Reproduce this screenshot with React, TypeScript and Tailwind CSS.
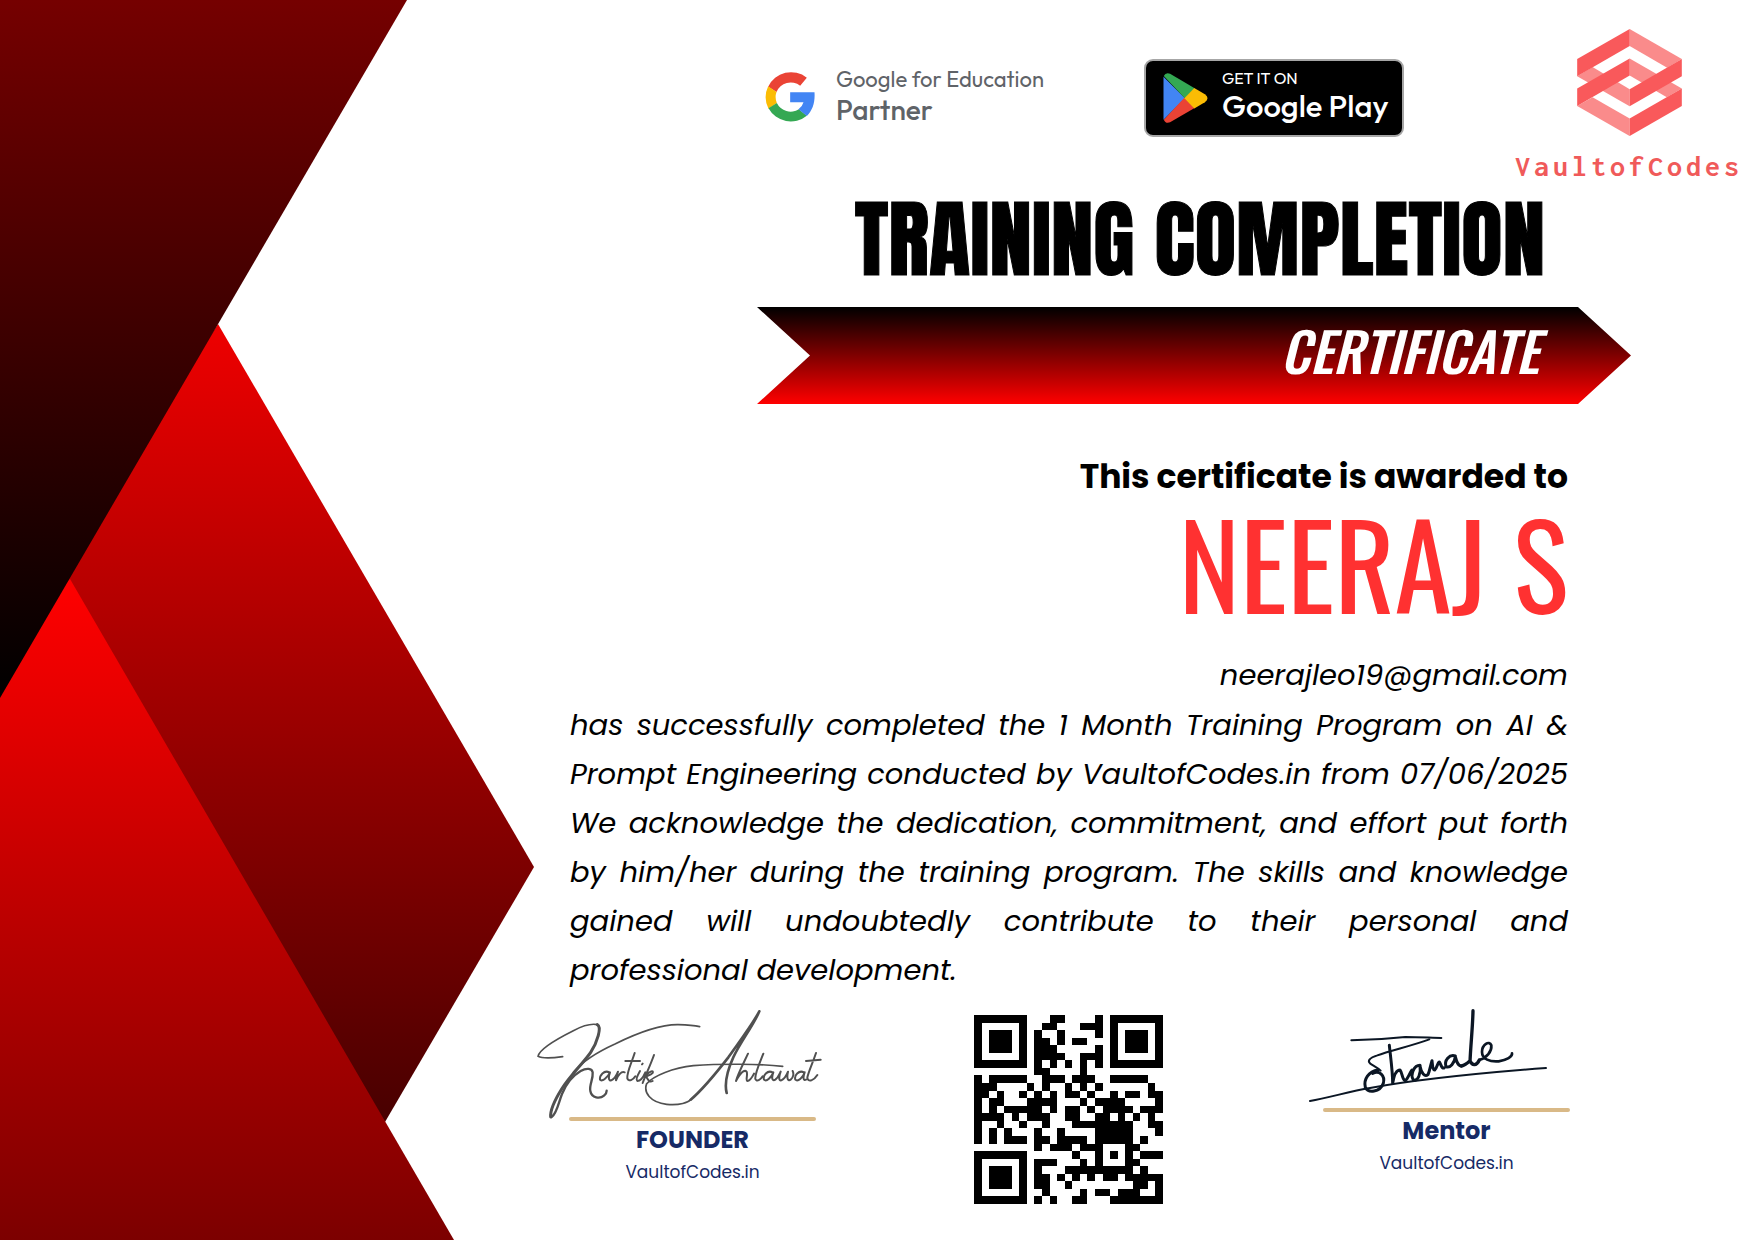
import type { ReactNode } from "react";

const QR_ROWS = [
  "1111111000110000101111111",
  "1000001001100011101000001",
  "1011101010010000101011101",
  "1011101011010110001011101",
  "1011101011100000101011101",
  "1000001011110011101000001",
  "1111111010101010101111111",
  "0000000011000010000000000",
  "1011111001110111001111100",
  "1110000101001010100000010",
  "1101001010101101001011011",
  "1011000111100010111100001",
  "1010111110101101011110111",
  "1111010111001100110101010",
  "1001001001000111111110011",
  "1010100010010000111110001",
  "1010111011011110111110100",
  "0000000010111011100011000",
  "1111111000000100101010111",
  "1000001011100010100011000",
  "1011101010001111111110100",
  "1011101011010101011011111",
  "1011101011001000000001101",
  "1000001001000010110111001",
  "1111111010100110001111111",
];

function Backdrop() {
  return (
    <svg
      className="absolute inset-y-0 left-0 h-full"
      viewBox="0 0 534 1240"
      preserveAspectRatio="xMinYMin meet"
      aria-hidden="true"
    >
      <defs>
        <linearGradient id="dark" gradientUnits="userSpaceOnUse" x1="0" y1="0" x2="0" y2="698">
          <stop offset="0" stopColor="#750000" />
          <stop offset="1" stopColor="#000000" />
        </linearGradient>
        <linearGradient id="band" gradientUnits="userSpaceOnUse" x1="0" y1="243" x2="0" y2="1467">
          <stop offset="0" stopColor="#ff0000" />
          <stop offset="1" stopColor="#000000" />
        </linearGradient>
        <linearGradient id="corner" gradientUnits="userSpaceOnUse" x1="0" y1="579" x2="0" y2="1867">
          <stop offset="0" stopColor="#ff0000" />
          <stop offset="1" stopColor="#000000" />
        </linearGradient>
      </defs>
      <path d="M218 324 L534 867 L385 1122 L180 860 L50 579Z" fill="url(#band)" />
      <path d="M70 579 L454 1240 H0 V640Z" fill="url(#corner)" />
      <path d="M0 0 H407 L0 698Z" fill="url(#dark)" />
    </svg>
  );
}

function GoogleMark() {
  return (
    <svg className="h-[51px] w-[50px]" viewBox="47 94 149 153" aria-hidden="true">
      <path d="M172 111 A76 76 0 0 0 56 138 L81 154 A46 46 0 0 1 152 135Z" fill="#EA4335" />
      <path d="M56 137 A76 76 0 0 0 57 204 L82 187 A46 46 0 0 1 81 154Z" fill="#FBBC04" />
      <path d="M57 203 A76 76 0 0 0 172 225 L148 206 A46 46 0 0 1 82 187Z" fill="#34A853" />
      <path d="M122 155 H195 C197 185 190 208 172 226 L147 206 Q158 199 162 185 H122Z" fill="#4285F4" />
    </svg>
  );
}

function PlayMark() {
  return (
    <svg className="h-[50px] w-[45px]" viewBox="101 97 135 151" aria-hidden="true">
      <path d="M102 108 V238 L167 173Z" fill="#4285F4" />
      <path d="M103 106 Q108 94 122 99 L196 143 L167 174Z" fill="#34A853" />
      <path d="M103 238 Q108 251 122 246 L196 203 L165 172Z" fill="#EA4335" />
      <path d="M195 142 L227 161 Q243 173 227 185 L195 204 L165 173Z" fill="#FBBC04" />
    </svg>
  );
}

function VaultMark() {
  return (
    <svg className="h-[107px] w-[105px]" viewBox="231 57 313 320" aria-hidden="true">
      <g fill="#FA8B8B">
        <path d="M388 57 L544 147 L500 173 L388 108Z" />
        <path d="M231 198 L277 171 L388 237 V288Z" />
        <path d="M388 145 L544 235 L499 261 L388 196Z" />
        <path d="M231 287 L277 261 L388 325 V377Z" />
      </g>
      <g fill="#F9595B">
        <path d="M231 147 L388 57 V108 L231 198Z" />
        <path d="M231 235 L388 145 V196 L231 287Z" />
        <path d="M544 147 V198 L388 288 V237Z" />
        <path d="M544 235 V287 L388 377 V325Z" />
      </g>
    </svg>
  );
}

function QrCode() {
  return (
    <svg
      className="size-[189px]"
      viewBox="0 0 25 25"
      shapeRendering="crispEdges"
      role="img"
      aria-label="Verification QR code"
    >
      {QR_ROWS.flatMap((row, y) =>
        [...row].map((cell, x) =>
          cell === "1" ? <rect key={`${x}-${y}`} x={x} y={y} width="1" height="1" fill="#000" /> : null,
        ),
      )}
    </svg>
  );
}

function FounderSignature() {
  return (
    <svg
      className="h-[110px] w-[286px]"
      viewBox="48 50 858 330"
      fill="none"
      stroke="#505050"
      strokeLinecap="round"
      strokeLinejoin="round"
      role="img"
      aria-label="Founder signature"
    >
      <path
        strokeWidth="5"
        d="M128 193 C100 197 70 200 54 192 C58 170 110 140 160 115 C185 102 215 93 232 97 M160 240 C185 210 230 180 285 155 C360 118 420 96 475 97 C505 98 525 100 539 103"
      />
      <path strokeWidth="9" d="M232 97 C246 104 232 150 212 180 C190 212 150 250 125 290 C105 322 90 350 92 374" />
      <path strokeWidth="7" d="M95 374 C110 365 116 330 126 305 C138 275 158 250 182 236 C200 226 216 228 218 240 C220 262 207 278 211 296 C215 318 240 320 252 310 C258 305 260 300 260 295" />
      <path strokeWidth="6" d="M268 240 C252 232 238 250 240 262 C246 270 264 254 270 240 C264 256 266 266 274 264 C284 260 290 248 294 238 C290 250 288 260 288 264 C294 248 304 236 314 240 M344 182 C334 214 320 240 322 258 C326 270 340 262 346 252 M316 206 H360 M360 236 C352 250 346 262 352 266 C360 266 370 254 376 240 M366 216 L368 214 M402 188 C392 216 378 246 368 272 M376 250 C390 236 402 232 398 242 C394 248 384 250 378 252 C384 262 388 272 398 266" />
      <path strokeWidth="5" d="M788 222 C720 214 600 214 520 220 C460 226 400 250 380 274 C370 300 390 330 440 336 C480 340 505 330 512 322" />
      <path strokeWidth="8" d="M512 322 C550 290 590 240 625 195 C660 145 695 100 718 57 M718 57 C700 100 660 150 640 195 C622 235 612 270 620 302" />
      <path strokeWidth="6" d="M684 184 C670 214 654 244 648 266 C660 244 672 230 680 238 C684 248 676 264 682 266 C690 266 698 252 702 244 M730 184 C718 214 704 244 706 260 C710 270 722 262 728 252 M758 240 C742 232 728 250 732 262 C740 270 754 254 760 240 C754 256 756 268 766 262 C774 256 778 246 782 238 C776 254 776 266 784 264 C794 260 800 248 804 238 C800 254 802 268 812 262 C820 256 822 244 818 236 M852 240 C836 232 822 250 826 262 C834 270 850 254 854 240 C848 256 850 266 858 262 M888 182 C878 212 864 242 862 256 C864 272 882 264 892 248 M858 206 L902 202" />
    </svg>
  );
}

function MentorSignature() {
  return (
    <svg
      className="h-[93px] w-[240px]"
      viewBox="54 53 720 279"
      fill="none"
      stroke="#0b1624"
      strokeLinecap="round"
      strokeLinejoin="round"
      role="img"
      aria-label="Mentor signature"
    >
      <path
        strokeWidth="6"
        d="M184 147 C240 146 300 142 346 137 C390 137 430 140 454 140 M418 144 C370 162 300 178 262 192 C238 200 232 208 240 216 C248 222 262 228 272 238"
      />
      <path strokeWidth="6" d="M60 329 C120 318 180 300 240 290 C360 268 560 246 768 230" />
      <path strokeWidth="9" d="M264 236 C236 240 220 264 226 288 C234 306 270 304 280 276 C286 252 268 236 248 246" />
      <path strokeWidth="9" d="M298 162 C302 200 308 240 308 276 C312 250 320 236 330 236 C338 246 336 266 346 268 C354 262 358 246 366 236 M390 222 C372 222 360 250 370 266 C384 272 394 244 390 224 C394 246 404 258 414 250 C420 236 422 220 426 208 C428 224 428 236 434 236 C442 230 442 214 448 212 C454 220 454 232 462 230 M496 194 C478 188 462 208 468 226 C480 232 494 214 496 196 C500 212 504 224 514 224" />
      <path strokeWidth="10" d="M549 58 C548 110 542 160 540 212 M514 224 C526 222 534 214 540 208 C546 224 560 224 568 206" />
      <path strokeWidth="8" d="M568 206 C590 200 606 180 604 162 C598 146 576 160 576 182 C576 204 600 212 626 210 C650 206 668 196 666 186" />
    </svg>
  );
}

function Signatory({ role, children }: { role: string; children: ReactNode }) {
  return (
    <div className="flex w-[247px] flex-col items-center text-[#162a66]">
      {children}
      <hr className="h-1 w-full rounded-full border-0 bg-[#d9b987]" />
      <p className="mt-px text-2xl font-bold leading-9">{role}</p>
      <p className="text-[17px] leading-7">VaultofCodes.in</p>
    </div>
  );
}

export default function App() {
  return (
    <main className="relative flex min-h-screen flex-col items-end overflow-hidden bg-white font-['Poppins','Inter',sans-serif] text-black">
      <Backdrop />

      <header className="relative flex h-[178px] items-start justify-end pr-3 pt-[29px]">
        <div className="mr-[100px] mt-[36px] flex items-center gap-[21px] font-['Google_Sans','Product_Sans','Outfit','Figtree',sans-serif] text-[#5f6368]">
          <GoogleMark />
          <p className="flex flex-col pb-1">
            <span className="text-[22px] leading-[29px]">Google for Education</span>
            <span className="text-[28px] font-medium leading-[32px]">Partner</span>
          </p>
        </div>
        <a
          href="#google-play"
          className="mr-[111px] mt-[30px] flex h-[78px] w-[260px] items-center gap-[14px] rounded-[9px] border-2 border-[#a6a6a6] bg-black pl-[17px] font-['Google_Sans','Product_Sans','Outfit','Figtree',sans-serif] text-white"
        >
          <PlayMark />
          <span className="flex flex-col pb-1">
            <span className="text-base leading-5">GET IT ON</span>
            <span className="text-[31px] font-medium leading-9">Google Play</span>
          </span>
        </a>
        <div className="flex flex-col items-center">
          <VaultMark />
          <p className="mt-3 font-['Inconsolata','Liberation_Mono',monospace] text-[30px] font-bold leading-9 tracking-[4px] text-[#f05a5a]">
            VaultofCodes
          </p>
        </div>
      </header>

      <h1 className="relative pb-2 pr-[210px] pt-px font-['Anton','Oswald',sans-serif] text-[85px] font-normal leading-[120px] [-webkit-text-stroke:1px_#000]">
        TRAINING COMPLETION
      </h1>

      <div className="relative mr-[124px] flex h-[97px] w-[874px] items-center justify-end bg-[linear-gradient(to_bottom,#000,#f00)] pb-3 pr-[92px] [clip-path:polygon(0_0,821px_0,100%_50%,821px_100%,0_100%,53px_50%)]">
        <p className="font-['Oswald',sans-serif] text-[54px] font-medium italic leading-none text-white">CERTIFICATE</p>
      </div>

      <section className="relative mr-[187px] mt-[49px] flex w-[998px] flex-col items-end">
        <h2 className="text-[33px] font-bold leading-[48px]">This certificate is awarded to</h2>
        <p className="mb-7 font-['Oswald',sans-serif] text-[116px] leading-[122px] text-[#ff3131]">NEERAJ S</p>
        <p className="mb-px text-[29px] italic leading-[49px]">neerajleo19@gmail.com</p>
        <p className="text-justify text-[29px] italic leading-[49px]">
          has successfully completed the 1 Month Training Program on AI &amp; Prompt Engineering conducted by
          VaultofCodes.in from 07/06/2025 We acknowledge the dedication, commitment, and effort put forth by him/her
          during the training program. The skills and knowledge gained will undoubtedly contribute to their personal
          and professional development.
        </p>
      </section>

      <section className="relative mr-[185px] mt-[14px] flex w-[1001px] items-start justify-between">
        <Signatory role="FOUNDER">
          <div className="-mb-[2px] -ml-[33px] self-start">
            <FounderSignature />
          </div>
        </Signatory>
        <div className="pr-[3px] pt-[6px]">
          <QrCode />
        </div>
        <Signatory role="Mentor">
          <div className="-ml-[15px] mb-[6px] self-start">
            <MentorSignature />
          </div>
        </Signatory>
      </section>
    </main>
  );
}
